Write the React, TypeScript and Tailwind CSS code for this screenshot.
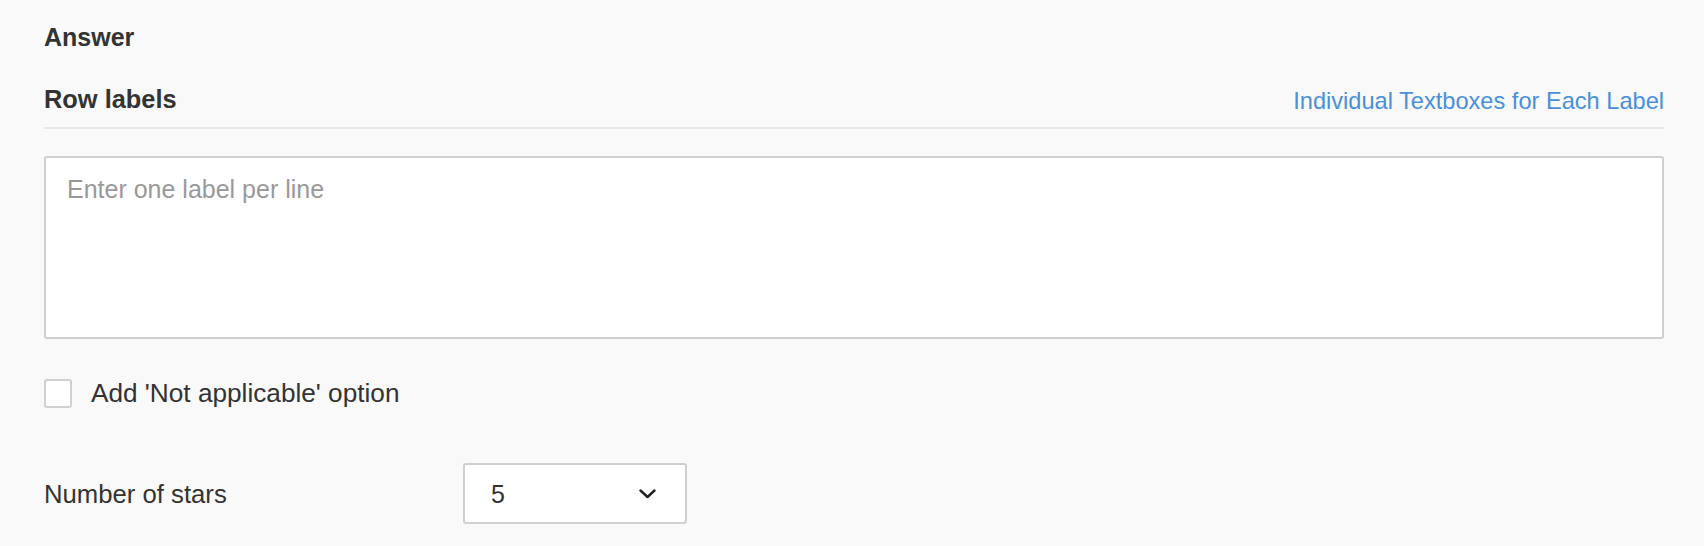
import { useState } from "react";

// ---------------------------------------------------------------------------
// Rating question — answer settings panel
// ---------------------------------------------------------------------------

function Chevron() {
  return (
    <svg width="17" height="10" viewBox="0 0 17 10" fill="none" className="text-[#222]">
      <polyline points="1.5,1.5 8.5,8 15.5,1.5" stroke="currentColor" strokeWidth="2.4" strokeLinecap="round" strokeLinejoin="round" />
    </svg>
  );
}

export default function App() {
  const [labels, setLabels] = useState("");
  const [notApplicable, setNotApplicable] = useState(false);

  return (
    <div className="min-h-[546px] bg-[#f9f9f9] pl-[44px] pr-[40px] pt-[22px] font-['Liberation_Sans',Arial,sans-serif] text-[#333]">
      <h2 className="text-[25px] font-bold leading-[30px]">Answer</h2>

      <div className="mt-[32px] flex items-end justify-between border-b-2 border-[#e8e8e8] pb-[13px]">
        <h3 className="text-[25.4px] font-bold leading-[30px]">Row labels</h3>
        <button type="button" className="mb-[-2px] text-[23.6px] leading-[30px] text-[#4a90d9]">
          Individual Textboxes for Each Label
        </button>
      </div>

      <textarea
        value={labels}
        onChange={(e) => setLabels(e.target.value)}
        placeholder="Enter one label per line"
        className="mt-[27px] block h-[183px] w-full resize-none rounded-[3px] border-2 border-[#cfcfcf] bg-white px-[21px] pt-[16px] text-[25px] leading-[30px] text-[#333] outline-none placeholder:text-[#999]"
      />

      <label className="mt-[39px] flex cursor-pointer items-center gap-[19px]">
        <span
          onClick={() => setNotApplicable((v) => !v)}
          className="flex h-[29px] w-[28px] items-center justify-center rounded-[3px] border-2 border-[#d0d0d0] bg-white"
        >
          {notApplicable && <span className="h-[12px] w-[12px] bg-[#4a90d9]" />}
        </span>
        <span className="text-[26.2px] leading-[30px]">Add 'Not applicable' option</span>
      </label>

      <div className="mt-[55px] flex items-center">
        <span className="w-[419px] text-[25.7px] leading-[30px]">Number of stars</span>
        <button
          type="button"
          className="flex h-[61px] w-[224px] items-center justify-between rounded-[3px] border-2 border-[#cfcfcf] bg-white pl-[26px] pr-[29px] text-[25px] leading-[30px]"
        >
          <span>5</span>
          <Chevron />
        </button>
      </div>
    </div>
  );
}
